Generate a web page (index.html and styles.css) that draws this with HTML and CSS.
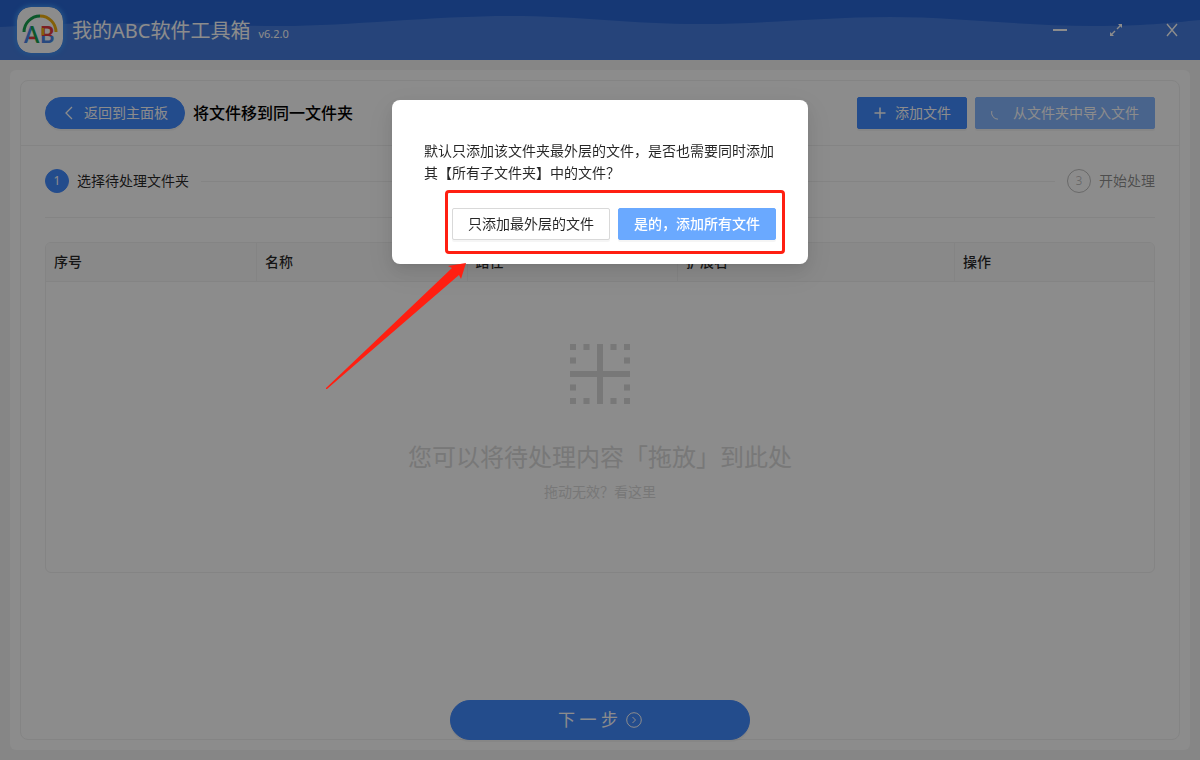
FILE: index.html
```html
<!DOCTYPE html>
<html lang="zh-CN">
<head>
    <meta charset="UTF-8">
    <meta name="viewport" content="width=device-width, initial-scale=1.0">
    <title>我的ABC软件工具箱</title>
    <link rel="stylesheet" href="styles.css">
</head>
<body>
    <div class="app">
        <header class="app-header">
            <svg class="header-wave" viewBox="0 0 1200 60" preserveAspectRatio="none" aria-hidden="true">
                <path d="M0 27 C40 25 70 23 110 23 C180 23 220 26 280 26 C350 26 430 16 510 16 C580 16 630 24 700 24 C770 24 820 17 890 17 C960 17 1020 26 1095 26 C1140 26 1170 23 1200 20 V60 H0 Z"/>
            </svg>
            <svg class="logo" viewBox="0 0 46 46" aria-hidden="true">
                <defs>
                    <linearGradient id="letterA">
                        <stop offset="0.5" stop-color="#4a86e8"/>
                        <stop offset="0.5" stop-color="#17a04f"/>
                    </linearGradient>
                    <linearGradient id="letterB" x1="0" y1="0" x2="0" y2="1">
                        <stop offset="0.54" stop-color="#e23a3f"/>
                        <stop offset="0.54" stop-color="#4a86e8"/>
                    </linearGradient>
                </defs>
                <rect width="46" height="46" rx="14" fill="#fff"/>
                <path class="arc arc-green" d="M7 25 A16 16 0 0 1 23 9"/>
                <path class="arc arc-yellow" d="M23 9 A16 16 0 0 1 39 25"/>
                <text x="7" y="36" fill="url(#letterA)">A</text>
                <text x="23" y="36" fill="url(#letterB)">B</text>
                <path d="M12 31 H18" stroke="#e23a3f" stroke-width="2.600"/>
                <path d="M26 21 V28" stroke="#f0b010" stroke-width="2.600"/>
            </svg>
            <div class="brand">
                <span class="brand-name">我的ABC软件工具箱</span>
                <span class="brand-version">v6.2.0</span>
            </div>
            <div class="window-controls">
                <button type="button" aria-label="最小化">
                    <svg viewBox="0 0 14 14"><path d="M0 7 H14" stroke-width="2"/></svg>
                </button>
                <button type="button" aria-label="最大化">
                    <svg viewBox="0 0 14 14">
                        <path d="M8 6 L11.500 2.500 M6 8 L2.500 11.500" stroke-width="1.400"/>
                        <path class="arrow-head" d="M9 1 H13 V5 Z M1 9 V13 H5 Z"/>
                    </svg>
                </button>
                <button type="button" aria-label="关闭">
                    <svg viewBox="0 0 14 14"><path d="M2 1 L12 13 M12 1 L2 13" stroke-width="1.400"/></svg>
                </button>
            </div>
        </header>

        <main class="workspace">
            <div class="panel">
                <section class="card">
                    <div class="toolbar">
                        <button type="button" class="btn btn-primary btn-back">
                            <svg viewBox="0 0 14 14"><path d="M10 1 L4 7 L10 13" stroke-width="1.300"/></svg>
                            <span>返回到主面板</span>
                        </button>
                        <h1 class="page-title">将文件移到同一文件夹</h1>
                        <div class="toolbar-actions">
                            <button type="button" class="btn btn-primary">
                                <svg viewBox="0 0 14 14"><path d="M7 1.500 V12.500 M1.500 7 H12.500" stroke-width="1.500"/></svg>
                                <span>添加文件</span>
                            </button>
                            <button type="button" class="btn btn-primary btn-loading">
                                <svg viewBox="0 0 14 14"><path d="M0.800 5 A6.500 6.500 0 0 0 7 13.200"/></svg>
                                <span>从文件夹中导入文件</span>
                            </button>
                        </div>
                    </div>

                    <div class="card-body">
                        <div class="steps">
                            <div class="step step-active">
                                <span class="step-number">1</span>
                                <span>选择待处理文件夹</span>
                            </div>
                            <div class="step-line"></div>
                            <div class="step">
                                <span class="step-number">3</span>
                                <span>开始处理</span>
                            </div>
                        </div>

                        <div class="file-list">
                            <table class="file-table">
                                <colgroup>
                                    <col class="col-normal">
                                    <col class="col-normal">
                                    <col class="col-normal">
                                    <col class="col-ext">
                                    <col>
                                </colgroup>
                                <thead>
                                    <tr>
                                        <th>序号</th>
                                        <th>名称</th>
                                        <th>路径</th>
                                        <th>扩展名</th>
                                        <th>操作</th>
                                    </tr>
                                </thead>
                            </table>
                            <div class="drop-area">
                                <svg class="drop-icon" viewBox="0 0 60 60" aria-hidden="true">
                                    <path d="M27 0 h6 v27 h27 v6 h-27 v27 h-6 v-27 h-27 v-6 h27 z"/>
                                    <path d="M0 0h6v6h-6z M13.500 0h6v6h-6z M40.500 0h6v6h-6z M54 0h6v6h-6z M0 13.500h6v6h-6z M54 13.500h6v6h-6z M0 40.500h6v6h-6z M54 40.500h6v6h-6z M0 54h6v6h-6z M13.500 54h6v6h-6z M40.500 54h6v6h-6z M54 54h6v6h-6z"/>
                                </svg>
                                <p class="drop-text">您可以将待处理内容「拖放」到此处</p>
                                <a class="drop-help" href="#">拖动无效？看这里</a>
                            </div>
                        </div>
                    </div>

                    <button type="button" class="btn btn-primary btn-next">
                        <span>下 一 步</span>
                        <svg viewBox="0 0 16 16"><circle cx="8" cy="8" r="7.300"/><path d="M6.500 5 L9.500 8 L6.500 11"/></svg>
                    </button>
                </section>
            </div>
        </main>
    </div>

    <div class="overlay">
        <div class="modal" role="dialog" aria-modal="true">
            <p class="modal-text">默认只添加该文件夹最外层的文件，是否也需要同时添加其【所有子文件夹】中的文件？</p>
            <div class="modal-actions">
                <button type="button" class="btn btn-default">只添加最外层的文件</button>
                <button type="button" class="btn btn-confirm">是的，添加所有文件</button>
            </div>
            <div class="highlight"></div>
            <svg class="arrow" viewBox="0 0 144 132" aria-hidden="true">
                <path d="M142 3 L124 6 L128 8 L2 128 L2 129 L3 129 L135 15 L137 19 Z"/>
            </svg>
        </div>
    </div>
</body>
</html>
```
FILE: styles.css
```css
:root {
    --primary: #418aff;
    --header-dark: #2866d5;
    --header-light: #457cde;
    --line: #f0f0f0;
    --red: #ff1f11;
}

* {
    margin: 0;
    padding: 0;
    box-sizing: border-box;
}

body {
    background: #f5f5f5;
    color: rgba(0, 0, 0, 0.85);
    font-family: "Noto Sans", "Noto Sans CJK SC", sans-serif;
    font-size: 14px;
    line-height: 22px;
}

button {
    font: inherit;
    cursor: pointer;
}

svg {
    display: block;
    flex: none;
}

.app {
    min-height: 100vh;
    display: flex;
    flex-direction: column;
}

/* Header */
.app-header {
    position: relative;
    display: flex;
    align-items: center;
    height: 60px;
    padding-left: 17px;
    background: var(--header-dark);
    color: #fff;
}

.header-wave {
    position: absolute;
    top: 0;
    left: 0;
    width: 100%;
    height: 100%;
    fill: var(--header-light);
}

.logo,
.brand,
.window-controls {
    position: relative;
}

.logo {
    width: 46px;
    height: 46px;
    border-radius: 14px;
    box-shadow: 0 0 4px 2px #3f93f5;
    font-family: Lato, sans-serif;
    font-size: 22px;
    font-weight: 700;
}

.arc {
    fill: none;
    stroke-width: 3;
}

.arc-green {
    stroke: #17a04f;
}

.arc-yellow {
    stroke: #f0b010;
}

.brand {
    display: flex;
    align-items: baseline;
    gap: 8px;
    padding-top: 2px;
    margin-left: 9px;
}

.brand-name {
    font-size: 20px;
    line-height: 30px;
}

.brand-version {
    font-size: 11px;
}

.window-controls {
    display: flex;
    margin-left: auto;
}

.window-controls button {
    display: flex;
    align-items: center;
    justify-content: center;
    width: 56px;
    height: 60px;
    border: none;
    background: none;
}

.window-controls svg {
    width: 14px;
    height: 14px;
    fill: none;
    stroke: #fff;
}

.window-controls .arrow-head {
    fill: #fff;
    stroke: none;
}

/* Panel */
.workspace {
    flex: 1;
    display: flex;
    padding: 10px;
}

.panel {
    flex: 1;
    display: flex;
    padding: 10px;
    border-radius: 6px;
    background: #fff;
}

.card {
    flex: 1;
    display: flex;
    flex-direction: column;
    border: 1px solid var(--line);
    border-radius: 8px;
}

.toolbar {
    display: flex;
    align-items: center;
    gap: 8px;
    padding: 16px 24px;
    border-bottom: 1px solid var(--line);
}

.toolbar-actions {
    display: flex;
    gap: 8px;
    margin-left: auto;
}

.page-title {
    color: #000;
    font-size: 16px;
    font-weight: 500;
}

.btn {
    display: flex;
    align-items: center;
    justify-content: center;
    gap: 8px;
    height: 32px;
    padding: 0 15px;
    border: 1px solid transparent;
    border-radius: 2px;
    box-shadow: 0 2px 0 rgba(0, 0, 0, 0.04);
}

.btn svg {
    width: 14px;
    height: 14px;
    fill: none;
    stroke: currentColor;
}

.btn-primary {
    border-color: var(--primary);
    background: var(--primary);
    color: #fff;
}

.btn-back {
    padding: 0 16px;
    border-radius: 16px;
}

.btn-loading {
    border-color: #86b6ff;
    background: #86b6ff;
}

.card-body {
    padding: 24px;
}

.steps {
    display: flex;
    align-items: center;
    padding-bottom: 24px;
    margin: -1px 0 24px;
    border-bottom: 1px solid var(--line);
}

.step {
    display: flex;
    align-items: center;
    gap: 8px;
    color: rgba(0, 0, 0, 0.45);
}

.step-number {
    width: 24px;
    height: 24px;
    border: 1px solid rgba(0, 0, 0, 0.25);
    border-radius: 50%;
    color: rgba(0, 0, 0, 0.25);
    font-size: 12px;
    text-align: center;
}

.step-active {
    color: rgba(0, 0, 0, 0.85);
}

.step-active .step-number {
    border-color: var(--primary);
    background: var(--primary);
    color: #fff;
}

.step-line {
    flex: 1;
    height: 1px;
    margin: 0 12px;
    background: var(--line);
}

/* File list */
.file-list {
    display: flex;
    flex-direction: column;
    border: 1px solid var(--line);
    border-radius: 6px;
    overflow: hidden;
}

.file-table {
    width: 100%;
    table-layout: fixed;
    border-collapse: collapse;
}

.col-normal {
    width: 19%;
}

.col-ext {
    width: 25%;
}

.file-table th {
    height: 38px;
    padding: 0 8px;
    border-right: 1px solid var(--line);
    border-bottom: 1px solid var(--line);
    background: #fafafa;
    font-weight: 500;
    text-align: left;
}

.file-table th:last-child {
    border-right: none;
}

.drop-area {
    display: flex;
    flex-direction: column;
    align-items: center;
    padding: 62px 0 69px;
}

.drop-icon {
    width: 60px;
    height: 60px;
    fill: #dadada;
}

.drop-text {
    margin: 34px 0 5px;
    color: #dadada;
    font-size: 24px;
    line-height: 38px;
}

.drop-help {
    color: #dadada;
    text-decoration: none;
}

.btn-next {
    width: 300px;
    height: 40px;
    margin: auto auto -1px;
    border-radius: 20px;
    font-size: 17px;
}

.btn-next svg {
    width: 16px;
    height: 16px;
}

/* Dialog */
.overlay {
    position: fixed;
    inset: 0;
    background: rgba(0, 0, 0, 0.45);
}

.modal {
    position: relative;
    width: 416px;
    margin: 100px auto 0;
    padding: 40px 32px 24px;
    border-radius: 8px;
    background: #fff;
    box-shadow: 0 3px 6px -4px rgba(0, 0, 0, 0.12), 0 6px 16px rgba(0, 0, 0, 0.08), 0 9px 28px 8px rgba(0, 0, 0, 0.05);
}

.modal-actions {
    display: flex;
    justify-content: flex-end;
    gap: 8px;
    margin-top: 24px;
}

.btn-default {
    border-color: #d9d9d9;
    background: #fff;
    color: rgba(0, 0, 0, 0.85);
}

.btn-confirm {
    border-color: #6aa9ff;
    background: #6aa9ff;
    color: #fff;
    font-weight: 500;
}

.highlight {
    position: absolute;
    top: 90px;
    left: 53px;
    width: 340px;
    height: 64px;
    border: 3px solid var(--red);
    border-radius: 4px;
    pointer-events: none;
}

.arrow {
    position: absolute;
    top: 160px;
    left: -68px;
    width: 144px;
    height: 132px;
    fill: var(--red);
    pointer-events: none;
}
```
